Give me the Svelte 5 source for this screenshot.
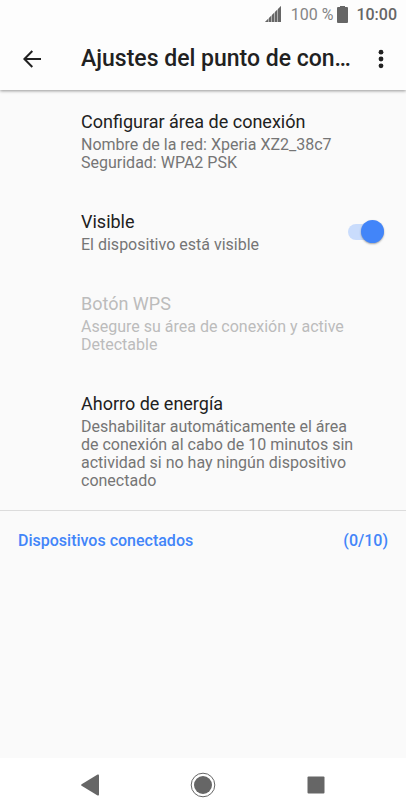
<script lang="ts">
  type Setting = {
    id: string;
    title: string;
    summary: string;
    disabled?: boolean;
    toggle?: boolean;
  };

  const settings: Setting[] = [
    { id: 'configure', title: 'Configurar área de conexión', summary: 'Nombre de la red: Xperia XZ2_38c7\nSeguridad: WPA2 PSK' },
    { id: 'visible', title: 'Visible', summary: 'El dispositivo está visible', toggle: true },
    { id: 'wps', title: 'Botón WPS', summary: 'Asegure su área de conexión y active Detectable', disabled: true },
    { id: 'power', title: 'Ahorro de energía', summary: 'Deshabilitar automáticamente el área de conexión al cabo de 10 minutos sin actividad si no hay ningún dispositivo conectado' },
  ];

  let visible = $state(true);
  let connected = $state(0);
  const maxDevices = 10;
</script>

{#snippet label(item: Setting)}
  <span class="title">{item.title}</span>
  <span class="summary">{item.summary}</span>
{/snippet}

<div class="screen">
  <header>
    <div class="status-bar">
      <svg class="signal" width="16" height="16" viewBox="0 0 16 16" aria-hidden="true">
        <path d="M0 16 3 13V16ZM4 12 6 10V16H4ZM7 9 9 7V16H7ZM10 6 12 4V16H10ZM13 3 16 0V16H13Z" />
        <path d="M0 16 16 0V16Z" opacity="0.5" />
      </svg>
      <span class="percent">100 %</span>
      <svg class="battery" width="11" height="17" viewBox="0 0 11 17" aria-hidden="true">
        <path d="M3 0H8V1H10Q11 1 11 2V16Q11 17 10 17H1Q0 17 0 16V2Q0 1 1 1H3Z" />
      </svg>
      <span class="clock">10:00</span>
    </div>

    <div class="toolbar">
      <button class="icon-button" aria-label="Atrás">
        <svg width="18" height="18" viewBox="0 0 18 18" fill="none" stroke="currentColor" stroke-width="2">
          <path d="M9.3 1 1.4 9 9.3 17M1.4 9H18" />
        </svg>
      </button>
      <h1>Ajustes del punto de con…</h1>
      <button class="icon-button" aria-label="Más opciones">
        <svg width="6" height="20" viewBox="0 0 6 20" fill="currentColor">
          <circle cx="3" cy="3.2" r="2.4" />
          <circle cx="3" cy="10" r="2.4" />
          <circle cx="3" cy="16.8" r="2.4" />
        </svg>
      </button>
    </div>
  </header>

  <main>
    <div class="settings">
      {#each settings as item (item.id)}
        {#if item.toggle}
          <label class="setting toggle">
            <span class="text">{@render label(item)}</span>
            <input class="switch" type="checkbox" role="switch" bind:checked={visible} />
          </label>
        {:else}
          <button class="setting" disabled={item.disabled}>
            <span class="text">{@render label(item)}</span>
          </button>
        {/if}
      {/each}
    </div>

    <h2>
      <span>Dispositivos conectados</span>
      <span>({connected}/{maxDevices})</span>
    </h2>
  </main>

  <nav aria-label="Navegación">
    <button aria-label="Atrás">
      <svg width="26" height="26" viewBox="0 0 26 26">
        <path d="M4.6 12.2 20.6 2.6Q22 2 22 3.4V22.6Q22 24 20.6 23.4L4.6 13.8Q3.4 13 4.6 12.2Z" />
      </svg>
    </button>
    <button aria-label="Inicio">
      <svg width="26" height="26" viewBox="0 0 26 26">
        <circle cx="13" cy="13" r="9" />
        <circle cx="13" cy="13" r="11.8" fill="none" stroke="currentColor" stroke-width="1" />
      </svg>
    </button>
    <button aria-label="Aplicaciones recientes">
      <svg width="26" height="26" viewBox="0 0 26 26">
        <rect x="4.5" y="4.5" width="17" height="17" rx="1" />
      </svg>
    </button>
  </nav>
</div>

<style>
  :global(body) {
    background: #fafafa;
  }

  .screen {
    display: flex;
    flex-direction: column;
    min-height: 100vh;
    background: #fafafa;
    color: #212121;
    font-family: Roboto, sans-serif;
  }

  button {
    padding: 0;
    border: 0;
    background: none;
    color: inherit;
    font: inherit;
    text-align: left;
  }

  header {
    background: #fdfdfd;
    box-shadow: 0 1px 3px rgba(0, 0, 0, 0.4);
  }

  .status-bar {
    display: flex;
    align-items: center;
    justify-content: flex-end;
    height: 28px;
    padding-right: 9px;
    color: #666;
    font-size: 16px;
  }

  .status-bar svg {
    fill: currentColor;
  }

  .percent {
    margin: 0 4px 0 10px;
    color: #858585;
  }

  .clock {
    margin-left: 8px;
    font-weight: 500;
  }

  .toolbar {
    display: flex;
    align-items: center;
    height: 62px;
    padding: 0 6px 0 12px;
  }

  .icon-button {
    display: flex;
    align-items: center;
    justify-content: center;
    flex-shrink: 0;
    width: 39px;
    height: 40px;
  }

  h1 {
    flex: 1;
    min-width: 0;
    margin: 0 0 0 30px;
    overflow: hidden;
    font-size: 23px;
    font-weight: 500;
    line-height: 34px;
    text-overflow: ellipsis;
    white-space: nowrap;
  }

  main {
    flex: 1;
  }

  .settings {
    padding: 1px 0;
    border-bottom: 1px solid #dcdcdc;
  }

  .setting {
    display: flex;
    align-items: center;
    box-sizing: border-box;
    width: 100%;
    padding: 19px 48px 19px 81px;
  }

  .setting.toggle {
    justify-content: space-between;
    padding-right: 22px;
  }

  .text {
    display: flex;
    flex-direction: column;
    gap: 2px;
  }

  .title {
    font-size: 18px;
    line-height: 24px;
  }

  .summary {
    color: #757575;
    font-size: 16px;
    line-height: 18px;
    white-space: pre-line;
  }

  .setting:disabled .title,
  .setting:disabled .summary {
    color: #bcbcbc;
  }

  .switch {
    position: relative;
    flex-shrink: 0;
    width: 36px;
    height: 24px;
    margin: 0;
    appearance: none;
  }

  .switch::before {
    content: '';
    position: absolute;
    inset: 4px 0;
    border-radius: 8px;
    background: #c9c9c9;
  }

  .switch::after {
    content: '';
    position: absolute;
    top: 0;
    left: 0;
    width: 23px;
    height: 23px;
    border-radius: 50%;
    background: #fff;
    box-shadow: 0 1px 2px rgba(0, 0, 0, 0.35);
  }

  .switch:checked::before {
    background: #c9dcfc;
  }

  .switch:checked::after {
    left: 13px;
    background: #4285f9;
  }

  h2 {
    display: flex;
    justify-content: space-between;
    margin: 0;
    padding: 18px;
    color: #4285f9;
    font-size: 16px;
    font-weight: 500;
    line-height: 24px;
  }

  nav {
    display: flex;
    align-items: center;
    justify-content: center;
    gap: 87px;
    height: 54px;
    background: #fff;
    color: #666;
  }

  nav button {
    display: flex;
  }

  nav svg {
    fill: currentColor;
  }
</style>
